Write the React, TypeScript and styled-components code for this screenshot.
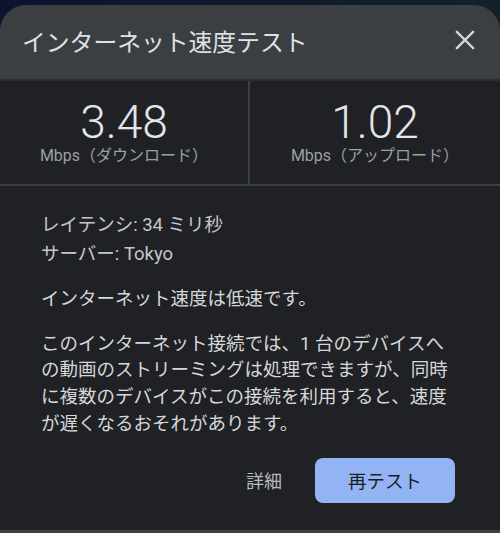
import styled, { createGlobalStyle } from 'styled-components'

const GlobalStyle = createGlobalStyle`
  html, body {
    margin: 0;
    padding: 0;
    background: #0e1628;
  }
  body {
    font-family: Roboto, "Noto Sans CJK JP", sans-serif;
    overflow: hidden;
  }
`

const Page = styled.div`
  width: 500px;
  height: 533px;
  padding-top: 5px;
  box-sizing: border-box;
  background: linear-gradient(90deg, #0c1430 0%, #101a2c 60%, #13222a 100%);
`

const Dialog = styled.div`
  height: 528px;
  display: flex;
  flex-direction: column;
  border-radius: 26px 26px 0 0;
  overflow: hidden;
  background: #202124;
  border-bottom: 3px solid #3c4043;
  box-sizing: border-box;
`

const Header = styled.div`
  height: 74px;
  flex-shrink: 0;
  display: flex;
  align-items: center;
  justify-content: space-between;
  padding: 0 23px 0 22px;
  background: #3c3f42;
  border-bottom: 2px solid #2c2e31;
`

const Title = styled.h1`
  margin: 0 0 4px 0;
  font-size: 23.8px;
  font-weight: 400;
  color: #dfe1e4;
`

const CloseButton = styled.button`
  width: 24px;
  height: 24px;
  padding: 0;
  border: none;
  background: none;
  display: flex;
  align-items: center;
  justify-content: center;
  margin-bottom: 4px;
  color: #d5d7da;
`

const Stats = styled.div`
  display: grid;
  grid-template-columns: 1fr 1fr;
  height: 103px;
  border-bottom: 2px solid #3c4043;
  flex-shrink: 0;
`

const Stat = styled.div<{ divider?: boolean }>`
  display: flex;
  flex-direction: column;
  align-items: center;
  padding-top: 18px;
  ${props => props.divider ? 'border-right: 2px solid #3c4043;' : ''}
`

const Value = styled.div`
  font-family: Roboto, sans-serif;
  font-weight: 300;
  font-size: 46px;
  line-height: 46px;
  color: #e3e5e8;
`

const Unit = styled.div`
  margin-top: 1px;
  font-size: 16px;
  line-height: 20px;
  color: #9aa0a6;
`

const Body = styled.div`
  flex: 1;
  display: flex;
  flex-direction: column;
  padding: 25px 45px 0 41px;
  color: #d2d4d7;
`

const InfoLine = styled.div`
  font-size: 18.5px;
  line-height: 29px;
  color: #c4c7cb;
`

const Paragraph = styled.p<{ gap: number }>`
  margin: ${props => props.gap}px 0 0 0;
  font-size: 18.5px;
  line-height: 26.7px;
  color: #d5d7da;
`

const Actions = styled.div`
  display: flex;
  justify-content: flex-end;
  align-items: center;
  gap: 33px;
  margin-top: 20px;
`

const TextButton = styled.button`
  border: none;
  background: none;
  padding: 0;
  font-family: inherit;
  font-size: 18px;
  color: #b7babe;
`

const PrimaryButton = styled.button`
  width: 140px;
  height: 45px;
  border: none;
  border-radius: 8px;
  background: #93b4f4;
  color: #1c1d20;
  font-family: inherit;
  font-size: 18.5px;
`

export default function App() {
  return (
    <Page>
      <GlobalStyle />
      <Dialog>
        <Header>
          <Title>インターネット速度テスト</Title>
          <CloseButton aria-label="閉じる">
            <svg width="20" height="20" viewBox="0 0 20 20">
              <path d="M2 2 L18 18 M18 2 L2 18" stroke="currentColor" strokeWidth="2.4" strokeLinecap="square" />
            </svg>
          </CloseButton>
        </Header>
        <Stats>
          <Stat divider>
            <Value>3.48</Value>
            <Unit>Mbps（ダウンロード）</Unit>
          </Stat>
          <Stat>
            <Value>1.02</Value>
            <Unit>Mbps（アップロード）</Unit>
          </Stat>
        </Stats>
        <Body>
          <InfoLine>レイテンシ: 34 ミリ秒</InfoLine>
          <InfoLine>サーバー: Tokyo</InfoLine>
          <Paragraph gap={17}>インターネット速度は低速です。</Paragraph>
          <Paragraph gap={18}>
            このインターネット接続では、1 台のデバイスへの動画のストリーミングは処理できますが、同時に複数のデバイスがこの接続を利用すると、速度が遅くなるおそれがあります。
          </Paragraph>
          <Actions>
            <TextButton>詳細</TextButton>
            <PrimaryButton>再テスト</PrimaryButton>
          </Actions>
        </Body>
      </Dialog>
    </Page>
  )
}
